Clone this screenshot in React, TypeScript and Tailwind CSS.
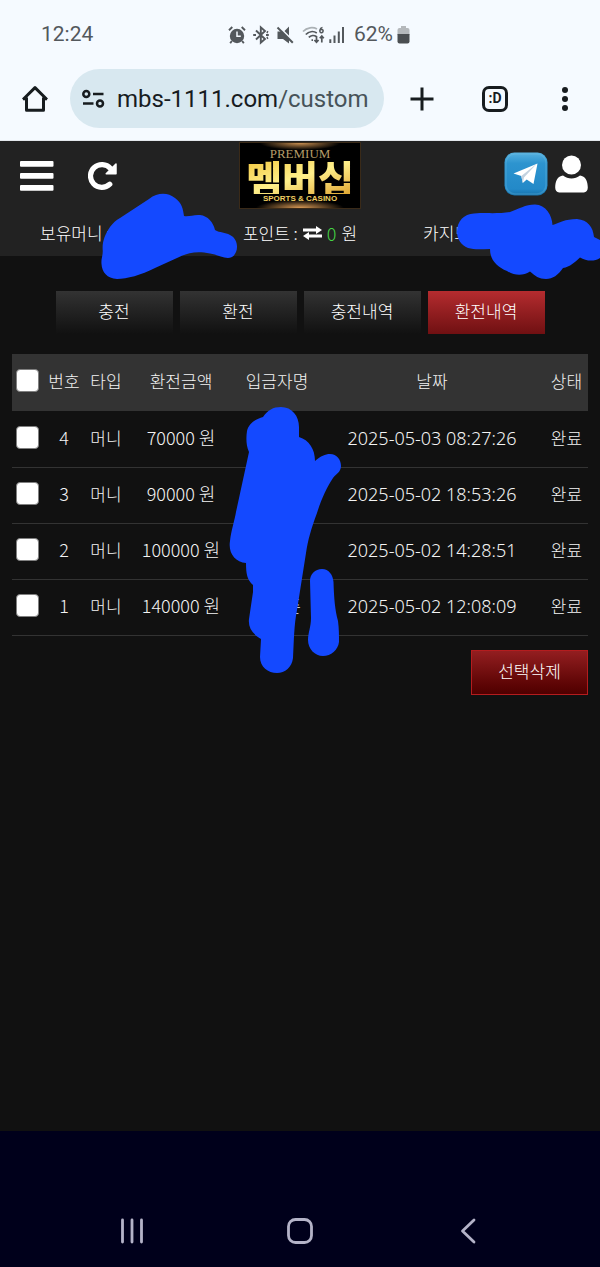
import { useState } from 'react';
import clsx from 'clsx';

interface Withdrawal {
  id: number;
  type: string;
  amount: number;
  depositor: string;
  date: string;
  status: string;
}

const withdrawals: Withdrawal[] = [
  { id: 4, type: '머니', amount: 70000, depositor: '', date: '2025-05-03 08:27:26', status: '완료' },
  { id: 3, type: '머니', amount: 90000, depositor: '', date: '2025-05-02 18:53:26', status: '완료' },
  { id: 2, type: '머니', amount: 100000, depositor: '', date: '2025-05-02 14:28:51', status: '완료' },
  { id: 1, type: '머니', amount: 140000, depositor: '준', date: '2025-05-02 12:08:09', status: '완료' },
];

const tabs = ['충전', '환전', '충전내역', '환전내역'];

function StatusBar() {
  return (
    <div className="flex h-[69px] items-center pl-[41px] text-[21px] text-[#53585c]">
      <span className="w-[186px]">12:24</span>
      <svg width="20" height="20" viewBox="0 0 20 20" fill="currentColor">
        <circle cx="10" cy="11" r="7.2" />
        <path d="M2 5.2 5.3 2M18 5.2 14.7 2M4.8 16l-1.6 2.2M15.2 16l1.6 2.2" stroke="currentColor" strokeWidth="1.9" />
        <path d="M10 6.5v4.800h3.800" stroke="#f5faff" strokeWidth="1.500" fill="none" />
      </svg>
      <svg className="ml-[5px]" width="18" height="20" viewBox="0 0 18 20" fill="none" stroke="currentColor" strokeWidth="1.900">
        <path d="m4 5.500 9 8.500-4.200 3.700V2.300L13 6l-9 8.500" />
        <path d="M1.200 10h2.800M14 10h2.800M14.800 6.800l1.200.6M14.800 13.200l1.200-.6" strokeWidth="2.200" />
      </svg>
      <svg className="ml-[6px]" width="18" height="20" viewBox="0 0 18 20" fill="currentColor">
        <path d="M1.500 6.500H6l7 7v5L7 14H1.500zM13 1.500v9L8.500 6z" />
        <path d="M1.500 2.500 16.800 17.800" stroke="currentColor" strokeWidth="2" />
      </svg>
      <svg className="ml-[8px]" width="24" height="20" viewBox="0 0 24 20" fill="none" stroke="currentColor" strokeWidth="1.700">
        <path d="M1 6.500C5 2.300 11 1.800 15 4" opacity=".45" />
        <path d="M3.800 9.500c3-3.100 7.500-3.800 11-1.500M6.800 12.300c2-2 5.300-2.400 7.500-.8" />
        <path d="M9.500 15.200h1.500M14.500 11v6M12.400 15l2.100 2.200 2.100-2.200M19.800 17.500v-6M17.800 13.300l2-2.200 2 2.200" />
        <path d="M20.500 2.500c-3 .5-3.500 4.800-1.400 5.200 2.400.3 2.700-3.200.6-3.200-.9 0-1.800.6-2.100 1.400" strokeWidth="1.500" />
      </svg>
      <svg className="ml-[2px]" width="18" height="20" viewBox="0 0 18 20" stroke="currentColor" strokeWidth="2">
        <path d="M2.300 14.200v3.800M6.500 10.500V18M10.800 6.500V18M15 2v16" />
      </svg>
      <span className="ml-2">62%</span>
      <svg className="ml-1" width="13" height="20" viewBox="0 0 13 20">
        <path d="M4 1h5v2h1.500A2 2 0 0 1 12.500 5v5H.5V5a2 2 0 0 1 2-2H4z" fill="#b4b8bb" />
        <path d="M.5 9h12v7.500a2 2 0 0 1-2 2h-8a2 2 0 0 1-2-2z" fill="#4a4e51" />
      </svg>
    </div>
  );
}

function BrowserBar() {
  return (
    <div className="flex items-center border-b border-[#e3e7ec] pr-8 pb-3 pl-[22px] text-[#171c1f]">
      <button aria-label="Home">
        <svg width="26" height="28" viewBox="0 0 26 28" fill="none" stroke="currentColor" strokeWidth="3">
          <path d="M1 14.500 13 2.600l12 11.900M4.500 12.500V25.200h17V12.500M1 13.700h4M21 13.700h4" strokeLinejoin="round" />
        </svg>
      </button>
      <button className="ml-[22px] flex h-[59px] min-w-0 flex-1 items-center rounded-full bg-[#d8e8f0] pl-3">
        <svg className="shrink-0" width="23" height="20" viewBox="0 0 23 20" fill="none" stroke="currentColor" strokeWidth="2.500">
          <circle cx="4.300" cy="5" r="3" />
          <circle cx="18" cy="14.600" r="3" />
          <path d="M11 5h10.500M1 14.600h10.500" />
        </svg>
        <span className="ml-3 truncate text-[24px]">
          mbs-1111.com<span className="text-[#475359]">/custom</span>
        </span>
      </button>
      <button className="ml-[26px]" aria-label="New tab">
        <svg width="24" height="24" viewBox="0 0 24 24" stroke="currentColor" strokeWidth="3">
          <path d="M12 .5v23M.5 12h23" />
        </svg>
      </button>
      <button className="ml-12 flex h-[26px] w-[26px] items-center justify-center rounded-[7px] border-[3px] border-current text-[14px] font-bold">
        :D
      </button>
      <button className="ml-[54px]" aria-label="Menu">
        <svg width="6" height="24" viewBox="0 0 6 24" fill="currentColor">
          <circle cx="3" cy="3" r="3" />
          <circle cx="3" cy="12" r="3" />
          <circle cx="3" cy="21" r="3" />
        </svg>
      </button>
    </div>
  );
}

function Logo() {
  return (
    <a
      href="#"
      className="flex h-[67px] w-[122px] flex-col items-center border border-[#3a2a18] bg-black bg-[radial-gradient(40px_7px_at_50%_0%,#c98f50,transparent),radial-gradient(44px_8px_at_50%_100%,#d99a55,transparent)] pt-[5px]"
    >
      <span className="font-['Liberation_Serif',serif] text-[13px] leading-[12px] text-[#b59c68]">PREMIUM</span>
      <span className="bg-linear-to-br from-[#f3c93c] via-[#fff08a] to-[#dfa52c] bg-clip-text font-['Noto_Sans_CJK_KR',sans-serif] text-[39px] leading-[34px] font-black text-transparent">
        멤버십
      </span>
      <span className="font-['Liberation_Sans',sans-serif] text-[8px] leading-[9px] font-bold text-[#f0cf62]">SPORTS &amp; CASINO</span>
    </a>
  );
}

function SiteHeader() {
  return (
    <header className="relative bg-[#222]">
      <div className="grid h-[69px] grid-cols-[1fr_auto_1fr] items-center">
        <div className="flex items-center gap-[34px] pl-5 text-white">
          <button aria-label="메뉴">
            <svg width="34" height="30" viewBox="0 0 34 30" fill="currentColor">
              <rect width="33.500" height="5.700" rx="1" />
              <rect y="12" width="33.500" height="5.700" rx="1" />
              <rect y="24" width="33.500" height="5.700" rx="1" />
            </svg>
          </button>
          <button aria-label="새로고침">
            <svg width="30" height="30" viewBox="0 0 30 30" fill="none">
              <path d="M22.500 7.500A11.400 11.400 0 1 0 21.800 23.200" stroke="currentColor" strokeWidth="5.200" strokeLinecap="round" />
              <path d="M28 3v9.800H18.200z" fill="currentColor" stroke="currentColor" strokeWidth="1.500" strokeLinejoin="round" />
            </svg>
          </button>
        </div>
        <Logo />
        <div className="flex items-center justify-end gap-[7px] pr-3 pb-1 text-white">
          <a href="#" aria-label="텔레그램">
            <svg width="44" height="44" viewBox="0 0 44 44">
              <defs>
                <linearGradient id="tg" x2="0" y2="1">
                  <stop stopColor="#57b1df" />
                  <stop offset=".25" stopColor="#2d94cf" />
                  <stop offset=".85" stopColor="#2389c8" />
                  <stop offset="1" stopColor="#1672ab" />
                </linearGradient>
              </defs>
              <rect x=".5" y=".5" width="43" height="43" rx="10" fill="url(#tg)" />
              <rect x="2" y="2" width="40" height="40" rx="9" fill="none" stroke="#7cc6e8" strokeWidth="1.500" opacity=".25" />
              <path d="M9.500 21.500 33.500 11.500 29.500 32l-6.800-4.500-3.900 3.500-1.500-7z" fill="#fff" />
              <path d="M17.300 24 33 11.500 20 25.500 18.800 31z" fill="#c3d2df" />
            </svg>
          </a>
          <a href="#" aria-label="내 정보">
            <svg width="33" height="38" viewBox="0 0 33 38" fill="currentColor">
              <circle cx="16.500" cy="10" r="9.500" />
              <path d="M8 20.500c5 4 12 4 17 0 5.300.5 7.800 5.500 7.800 12 0 2.800-1.500 5-4 5H4.200c-2.500 0-4-2.200-4-5 0-6.500 2.500-11.500 7.800-12z" />
            </svg>
          </a>
        </div>
      </div>

      <div className="grid h-[46px] grid-cols-3 items-center text-[17px] font-light text-white">
        <span className="pl-10">보유머니 :</span>
        <span className="flex items-center justify-center gap-[5px]">
          포인트 :
          <svg width="19" height="14" viewBox="0 0 19 14" fill="currentColor">
            <path d="M0 2.500h13V0l6 4-6 4V5.500H0zM19 8.500H6V6l-6 4 6 4v-2.500h13z" />
          </svg>
          <span className="text-[18px] text-[#45d645]">0</span>
          원
        </span>
        <span className="pl-[23px]">카지노</span>
      </div>

      <svg className="pointer-events-none absolute top-[52px] left-[101px] z-10" width="137" height="87" viewBox="101 193 137 87" fill="#1449ff">
        <path d="M101.500 264C101 258 103 256 102.700 250C102 242 105 234 110 227C113 223 116 220 120 218L149 199C158 192 168 192.500 175 198C182 203 183 209 184 216C189 217 193 214.500 200 215C208 216 213 222 215 230C220 233 225 232 230 235C239 239 239 253 232 257C226 260 219 255 210 253.500C196 250.500 187 253 177 258L155 268C141 275 127 279 117 279C107 278.500 102 272 101.500 264Z" />
      </svg>
      <svg className="pointer-events-none absolute top-[63px] right-0 z-10" width="144" height="76" viewBox="456 204 144 76" fill="#1449ff">
        <path d="M457 232C457 221 464 214 474 213.500C486 212.500 499 214 510 212C519 209 525 204.500 535 204.500C546 205 552 215 552.500 225C559 223 565 219 577 219C588 220 593 227 594 237L600 240V258C594 262 586 261 580 257.500C575 262 570 267 563 268C558 275 553 279 546 279C539 279 535 276 530 271.500C523 276 515 276 507 271C497 267 490 260 490 249C482 249 475 250 468 248C461 245 457 239 457 232Z" />
      </svg>
    </header>
  );
}

function HistoryTable() {
  const [checked, setChecked] = useState<number[]>([]);
  const allChecked = checked.length === withdrawals.length;

  const toggle = (id: number) => {
    setChecked(prev => (prev.includes(id) ? prev.filter(x => x !== id) : [...prev, id]));
  };

  const checkboxClass =
    'block h-[23px] w-[23px] appearance-none rounded-[4px] border border-[#808080] bg-white checked:bg-[#2b6fe0]';

  return (
    <div className="relative mt-5 px-3">
      <table className="w-full table-fixed border-collapse text-center text-[17px] font-light text-[#f4f4f4]">
        <colgroup>
          <col className="w-[31px]" />
          <col className="w-[42px]" />
          <col className="w-[42px]" />
          <col className="w-[108px]" />
          <col className="w-[84px]" />
          <col />
          <col className="w-[43px]" />
        </colgroup>
        <thead>
          <tr className="h-[57px] bg-[#333]">
            <th className="pb-1 pl-1">
              <input
                type="checkbox"
                aria-label="전체 선택"
                className={checkboxClass}
                checked={allChecked}
                onChange={() => setChecked(allChecked ? [] : withdrawals.map(w => w.id))}
              />
            </th>
            <th className="pb-1 font-light">번호</th>
            <th className="pb-1 font-light">타입</th>
            <th className="pb-1 font-light">환전금액</th>
            <th className="pb-1 font-light">입금자명</th>
            <th className="pb-1 font-light">날짜</th>
            <th className="pb-1 font-light">상태</th>
          </tr>
        </thead>
        <tbody>
          {withdrawals.map(w => (
            <tr key={w.id} className="h-14 border-b border-[#333]">
              <td className="pb-[3px] pl-1">
                <input
                  type="checkbox"
                  aria-label={`${w.id}번 선택`}
                  className={checkboxClass}
                  checked={checked.includes(w.id)}
                  onChange={() => toggle(w.id)}
                />
              </td>
              <td className="pb-[3px] text-[18px]">{w.id}</td>
              <td className="pb-[3px]">{w.type}</td>
              <td className="pb-[3px] text-[18px]">{w.amount} 원</td>
              <td className="pr-[18px] pb-[3px] text-right">{w.depositor}</td>
              <td className="pb-px font-['Noto_Sans',sans-serif] text-[18px]">{w.date}</td>
              <td className="pb-[3px]">{w.status}</td>
            </tr>
          ))}
        </tbody>
      </table>

      <div className="mt-[14px] flex justify-end">
        <button className="h-[45px] w-[117px] border border-[#b41c1e] bg-linear-to-b from-[#931e20] to-[#4f0000] pb-[3px] text-[17px] font-light text-white">
          선택삭제
        </button>
      </div>

      <svg className="pointer-events-none absolute top-[52px] left-[228px] z-10" width="114" height="268" viewBox="228 406 114 268" fill="#1449ff">
        <path d="M263 417C268 410 273 407 281 407C292 407 299 416 299 427V437C309 440 315 449 315 461C321 456 325 454 330 454C337 454 341 460 341 466C341 472 336 474 333 478C327 487 321 500 317 513C311 529 308 540 306 553L297 610C294 625 294 640 293 658C292 667 285 673 277 673C268 673 260 667 260 657L261 639C252 634 248 627 249 619L253 592V585C247 580 246 573 246 563C235 562 228 553 230 541C231 531 235 519 236 512L249 452C246 445 246 438 247 431C249 423 256 419 263 417Z" />
        <path d="M322 569C329 569 333 575 333.500 582C334 598 335 610 338 621C339 628 339 636 339 642C338 650 331 656 323 656C315 656 308 649 308 640C308 633 311 627 311 618L310 581C310 574 315 569 322 569Z" />
      </svg>
    </div>
  );
}

export default function App() {
  const [activeTab, setActiveTab] = useState('환전내역');

  return (
    <div className="flex min-h-screen flex-col bg-[#111] font-['Noto_Sans_CJK_KR',sans-serif]">
      <div className="bg-[#f5faff] font-[Roboto,sans-serif]">
        <StatusBar />
        <BrowserBar />
      </div>
      <SiteHeader />

      <main className="flex-1 pt-[35px]">
        <div className="flex justify-center gap-[7px]">
          {tabs.map(tab => (
            <button
              key={tab}
              onClick={() => setActiveTab(tab)}
              className={clsx(
                'h-[43px] w-[117px] bg-linear-to-b pb-1 text-[17px] font-light text-white',
                tab === activeTab ? 'from-[#b52c2f] to-[#701012]' : 'from-[#333] to-[#111]'
              )}
            >
              {tab}
            </button>
          ))}
        </div>
        <HistoryTable />
      </main>

      <nav className="grid h-[136px] grid-cols-3 justify-items-center bg-[#00001b] px-12 pt-[87px] text-[#b4b3c8]">
        <button className="h-[26px]" aria-label="Recent apps">
          <svg width="24" height="26" viewBox="0 0 24 26" stroke="currentColor" strokeWidth="2.800" strokeLinecap="round">
            <path d="M2.500 2v22M12 2v22M21.500 2v22" />
          </svg>
        </button>
        <button className="h-[26px]" aria-label="Home screen">
          <svg width="26" height="26" viewBox="0 0 26 26" fill="none" stroke="currentColor" strokeWidth="2.800">
            <rect x="1.500" y="1.500" width="23" height="23" rx="7" />
          </svg>
        </button>
        <button className="h-[26px]" aria-label="Back">
          <svg width="16" height="26" viewBox="0 0 16 26" fill="none" stroke="currentColor" strokeWidth="2.800" strokeLinecap="round" strokeLinejoin="round">
            <path d="M14 2 2.500 13 14 24" />
          </svg>
        </button>
      </nav>
    </div>
  );
}
